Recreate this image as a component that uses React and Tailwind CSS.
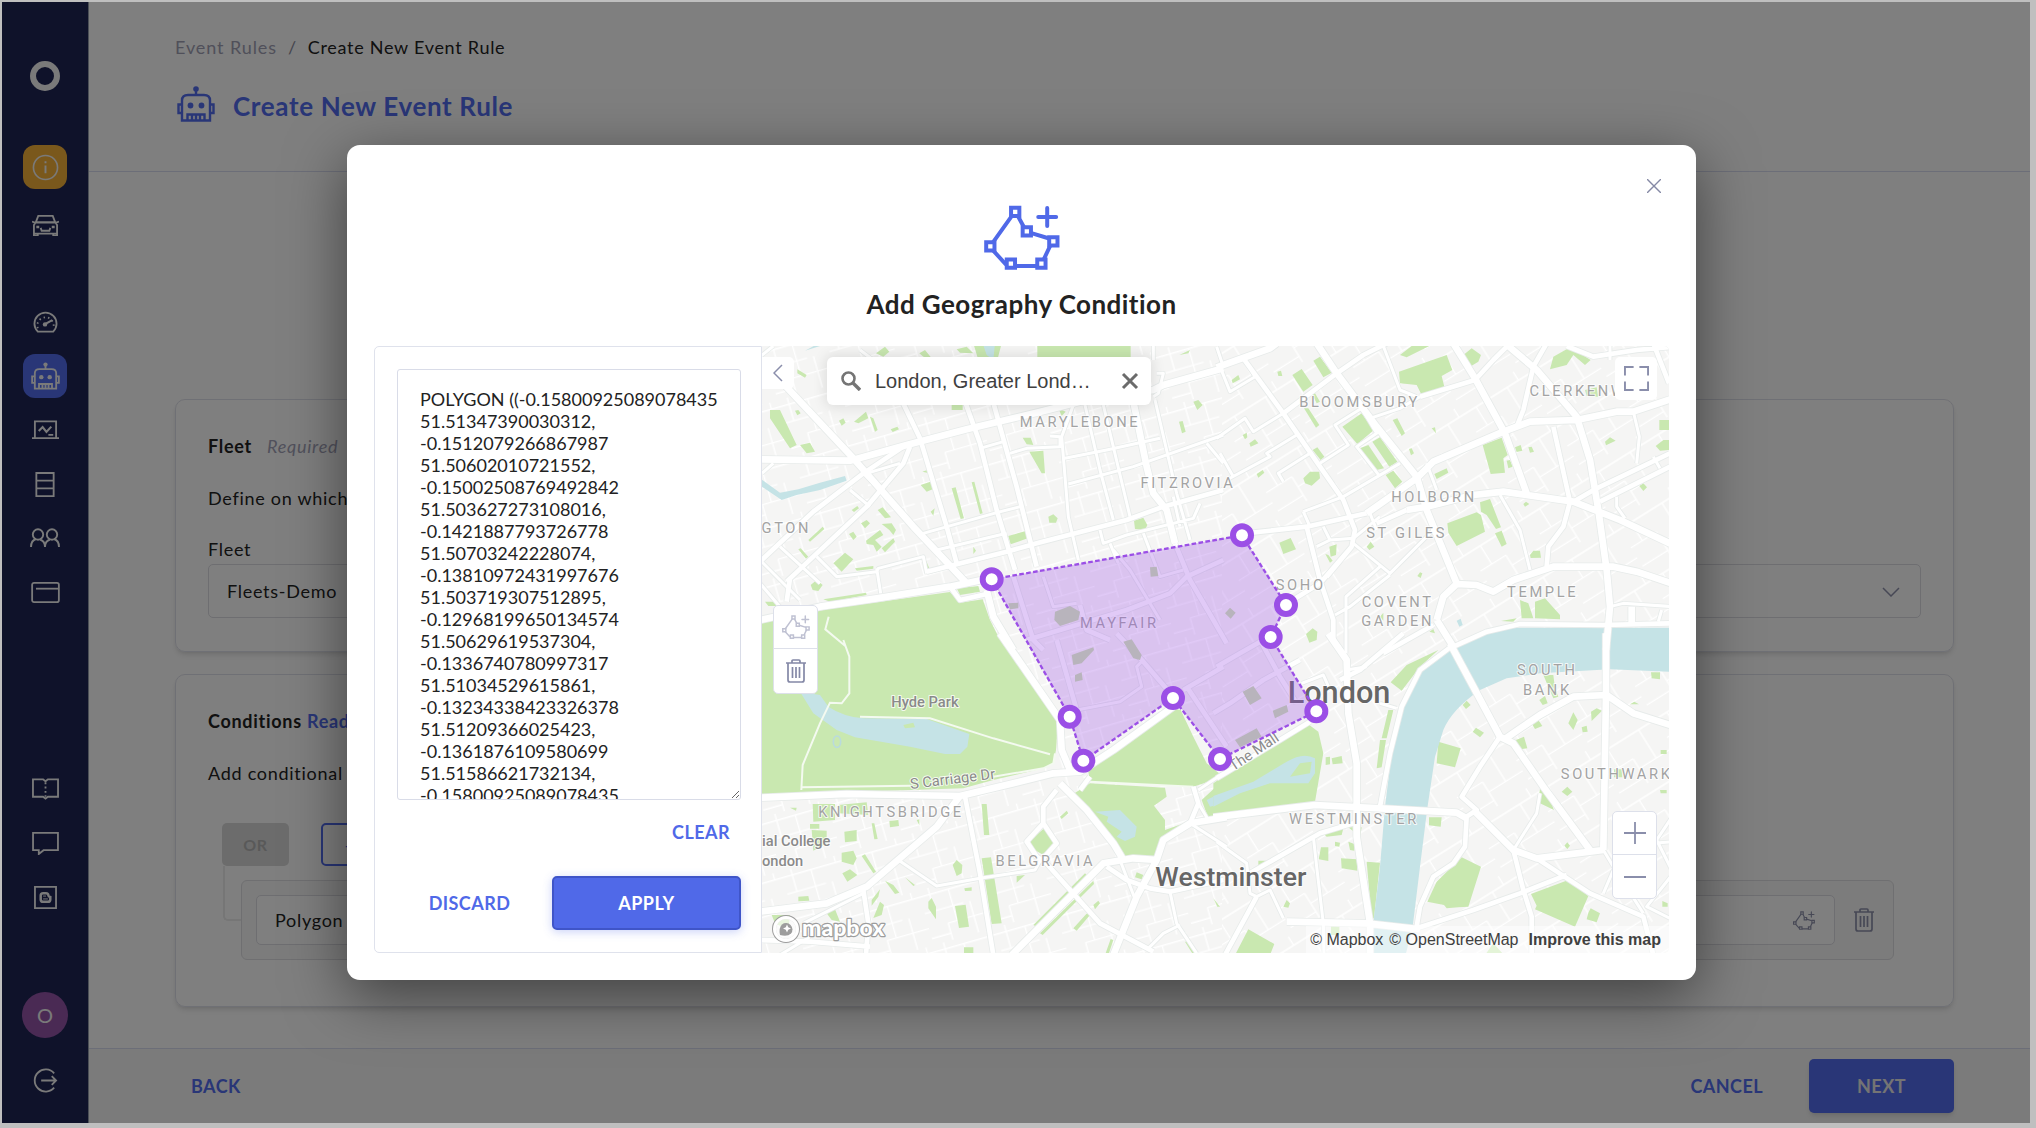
import { useState } from "react";

const WKT = `POLYGON ((-0.15800925089078435 51.51347390030312, -0.1512079266867987 51.50602010721552, -0.15002508769492842 51.503627273108016, -0.1421887793726778 51.50703242228074, -0.13810972431997676 51.503719307512895, -0.12968199650134574 51.50629619537304, -0.1336740780997317 51.51034529615861, -0.13234338423326378 51.51209366025423, -0.1361876109580699 51.51586621732134, -0.15800925089078435 51.51347390030312))`;

// ---------- icons ----------

const PolygonIcon = ({ className }) => (
  <svg viewBox="0 0 228 196" className={className} fill="none" stroke="currentColor" strokeWidth="12" aria-hidden="true">
    <path d="M84 32 27 112M102 34l18 33M140 84l56 17M200 121l-20 42M160 184H92M26 136l40 44" />
    <path d="M81 8h25v25H81zM116 67h25v25h-25zM196 97h25v25h-25zM160 164h25v25h-25zM68 164h25v25H68zM6 112h25v25H6z" />
    <path d="M190 9v54M163 36h54" strokeLinecap="round" />
  </svg>
);

const RobotIcon = ({ className }) => (
  <svg viewBox="0 0 38 36" className={className} fill="none" stroke="currentColor" strokeWidth="2.400" aria-hidden="true">
    <circle cx="19" cy="3" r="2.800" fill="currentColor" stroke="none" />
    <path d="M19 4v5M5 34.500V14.500q0-5.500 6-5.500h16q6 0 6 5.500v20zM5 18.500H1.500V27H5M33 18.500h3.500V27H33" />
    <path d="M10.500 34.500v-6h17v6M15 28.500v6M19 28.500v6M23 28.500v6" />
    <circle cx="13.500" cy="19.500" r="2.900" fill="currentColor" stroke="none" />
    <circle cx="24.500" cy="19.500" r="2.900" fill="currentColor" stroke="none" />
  </svg>
);

const TrashIcon = ({ className }) => (
  <svg viewBox="0 0 20 24" className={className} fill="none" stroke="currentColor" strokeWidth="1.700" aria-hidden="true">
    <path d="M0 4h20M6 4V2q0-1 1-1h6q1 0 1 1v2M2 4v17q0 2 2 2h12q2 0 2-2V4M6.500 8v11M10 8v11M13.500 8v11" />
  </svg>
);

const InfoIcon = () => (
  <svg viewBox="0 0 28 28" className="w-[27px] h-[27px]" fill="none" stroke="currentColor" strokeWidth="1.700" aria-hidden="true">
    <circle cx="14" cy="14" r="12.500" />
    <path d="M14 12v8M14 7.500v2" strokeWidth="2" />
  </svg>
);

const CarIcon = () => (
  <svg viewBox="0 0 28 22" className="w-[27px] h-[22px]" fill="none" stroke="currentColor" strokeWidth="1.900" aria-hidden="true">
    <path d="M4 8 6.500 1.500h15L24 8M0 7.500l3 1h22l3-1M2 20V11l2-3h20l2 3v9zM2 20v2h4v-2M22 20v2h4v-2M9 14l1 3h8l1-3" />
    <path d="M4.500 13h3M20.500 13h3" strokeWidth="2.500" />
  </svg>
);

const GaugeIcon = () => (
  <svg viewBox="0 0 26 22" className="w-[25px] h-[22px]" fill="none" stroke="currentColor" strokeWidth="1.900" aria-hidden="true">
    <path d="M5 21A11.500 11.500 0 1 1 21 21z" />
    <path d="m13 13 7-4" strokeWidth="2.200" />
    <circle cx="12.500" cy="13.500" r="2.300" fill="currentColor" stroke="none" />
    <path d="M5 17.500a8.500 8.500 0 1 1 16 0" strokeDasharray="1.500 3.200" />
  </svg>
);

const LaptopIcon = () => (
  <svg viewBox="0 0 28 20" className="w-[27px] h-5" fill="none" stroke="currentColor" strokeWidth="1.900" aria-hidden="true">
    <path d="M3 18V1h22v17M0 18.500h28M17 15h5" />
    <path d="m7 11 4-4 4 5 5-5.500" strokeWidth="2.200" />
  </svg>
);

const RowsIcon = () => (
  <svg viewBox="0 0 20 26" className="w-5 h-[25px]" fill="none" stroke="currentColor" strokeWidth="1.900" aria-hidden="true">
    <path d="M1 1h18v24H1zM1 9h18M1 17h18" />
  </svg>
);

const UsersIcon = () => (
  <svg viewBox="0 0 30 20" className="w-[30px] h-5" fill="none" stroke="currentColor" strokeWidth="1.900" aria-hidden="true">
    <circle cx="8" cy="6.500" r="5.200" />
    <circle cx="22" cy="6.500" r="5.200" />
    <path d="M1 19q0-6.500 5-8M10 11.500q5 1.500 5 7.500 0-6 5-7.500M24 11q5 1.500 5 8" />
  </svg>
);

const CardIcon = () => (
  <svg viewBox="0 0 30 22" className="w-[29px] h-[21px]" fill="none" stroke="currentColor" strokeWidth="1.900" aria-hidden="true">
    <rect x="1" y="1" width="28" height="20" rx="2" />
    <path d="M5 7h24" />
  </svg>
);

const BookIcon = () => (
  <svg viewBox="0 0 28 22" className="w-[27px] h-[22px]" fill="none" stroke="currentColor" strokeWidth="1.900" aria-hidden="true">
    <path d="M1 1h10.500L14 3l2.500-2H27v18H16.500L14 21l-2.500-2H1z" />
    <path d="M14 4v15" strokeDasharray="2 2.500" />
  </svg>
);

const ChatIcon = () => (
  <svg viewBox="0 0 28 24" className="w-[27px] h-[23px]" fill="none" stroke="currentColor" strokeWidth="1.900" aria-hidden="true">
    <path d="M1 1h26v18H12l-5 4v-4H1z" />
  </svg>
);

const BlogIcon = () => (
  <svg viewBox="0 0 24 24" className="w-[23px] h-[23px]" fill="none" stroke="currentColor" strokeWidth="1.900" aria-hidden="true">
    <path d="M1 1h22v22H1z" />
    <path d="M9.500 7.500h3q2.500 0 2.500 2.500 0 1 2 1.500v2.500q0 2.500-2.500 2.500h-5Q7 16.500 7 14v-4q0-2.500 2.500-2.500z" strokeWidth="2.600" />
    <path d="M9.500 10.500h3M9.500 13.500h5" strokeWidth="1" />
  </svg>
);

const LogoutIcon = () => (
  <svg viewBox="0 0 26 26" className="w-[25px] h-[25px]" fill="none" stroke="currentColor" strokeWidth="1.900" aria-hidden="true">
    <path d="M22 5.500a11.500 11.500 0 1 0 0 15M8.500 13H24M19.500 8.500 24 13l-4.500 4.500" />
  </svg>
);

// ---------- map data, drawn at three units per pixel ----------

const tiles = [
  {
    at: "translate(-6 -48)",
    parks:
      "M0 880 40 872 200 838 570 786 600 818 668 808 690 870 740 970 0 970zM832 40H1112V90H832zM640 40H725L712 90H655zM30 240 60 240 110 345 90 355 30 265zM120 345 150 338 165 365 140 370zM112 118 140 135 135 143 112 130zM105 242 115 240 122 250 112 256zM237 272 250 265 257 278 245 287zM282 275 318 245 325 265 295 280zM330 260 340 265 353 300 345 305zM392 298 412 290 417 298 398 306zM575 215H608V240H575zM895 235 917 245 905 258zM788 323 812 323 820 345 800 343zM808 365 850 362 855 430 845 430zM865 560 880 553 893 565 888 578 868 578zM745 618 797 603 803 625 752 643zM1122 572 1150 563 1162 585 1155 600 1125 597zM575 475 587 472 612 565 602 567zM635 457 643 455 668 550 660 552zM482 465 520 452 525 475 500 485zM487 425 508 418 508 430zM512 545 524 535 520 557zM275 540 292 528 297 535 282 546zM353 540 368 532 393 562 375 565zM303 580 320 570 330 580 315 595zM267 612 280 605 290 620 280 630zM318 632 360 600 370 615 345 630 365 650 350 665 340 645 320 642zM365 582 395 580 408 600 400 615 388 600zM365 655 400 625 405 635 375 667zM220 700 255 668 280 688 245 725zM285 715 340 708 340 716 290 722zM485 685 495 685 508 715 498 720zM145 630 188 590 193 597 150 635zM115 658 122 655 145 680 138 686zM152 765 170 750 188 765 175 783 158 780zM190 808 318 788 320 795 210 815zM590 775 655 768 660 785 600 795zM15 815 45 815 50 828 25 828zM1300 215 1315 210 1328 225 1312 240zM1257 275 1268 273 1277 305 1266 310zM1258 75 1290 60 1285 70zM640 650 648 662 640 672zM348 70 375 50 388 65 370 80zM478 70 495 60 515 85 490 80zM590 58 620 50 640 70 600 68z",
    water: "M0 445 60 488 115 478 180 458 255 438 260 452 180 480 110 495 65 510 35 490 0 466zM135 62 180 48 165 46zM668 40H705L700 90 680 75z",
    wide:
      "M0 388 270 392 440 345 620 298 830 248 960 215 1180 180 1210 165 1390 115M0 870 180 830 350 805 570 770 690 745M680 780 700 860 760 960M0 100 60 150 280 385 460 590 620 760M1120 215 1160 410 1180 490 1220 540 1245 640",
    mid:
      "M610 200 660 340 710 540 765 720M695 200 770 470 830 710M420 200 480 325 560 590 590 700M0 695 160 545 310 430 430 350M80 755 320 530 430 400 450 350M500 725 740 665 830 640 1100 570 1210 530 1390 480M570 770 600 810 690 790M90 745 80 815M760 740 820 930 850 960M960 825 980 900 1050 930M800 930 900 900 1100 840 1230 790 1280 740 1390 690M1245 640 1290 750 1360 870 1400 940",
    narrow:
      "M270 480 330 530M310 430 370 490M490 610 710 548 780 530M530 660 740 610M170 680 230 740 350 725 355 715 490 680 500 730M350 715 362 790M60 650 180 760M0 690 120 810M0 760 60 830M940 225 905 320 925 560 955 690M975 225 1020 420 1060 570M1030 225 1110 560M1185 210 1250 490 1290 630M750 370 800 355 900 350 900 320 870 318M915 385 1040 360 1200 325M925 462 1120 410 1390 315M1020 600 1030 640 1100 615 1300 565 1320 520M660 355 730 335M6 430 40 400M1180 40V90M1190 130 1210 130 1195 190 1180 200M1340 340 1390 400M1370 50 1390 110M850 740 880 830 950 820M1060 660 1110 720 1200 870M1150 610 1200 740 1270 720M320 430 420 400M1050 640 1075 700M0 80 40 48M430 225 380 120 300 60M1240 500 1260 590",
  },
  {
    at: "translate(1374 -48)",
    parks:
      "M540 75 575 48 628 48 560 82zM537 125 680 75 697 120 665 138 673 170 605 195 590 165 540 160zM730 75 755 55 783 75 775 95 750 110zM1000 80 1050 52 1112 90 1095 105 1060 75 1040 105 990 118zM217 135 245 117 278 165 250 185zM280 92 300 80 335 128 310 142zM35 150 55 135 60 148 38 160zM172 125 183 122 187 138 175 138zM252 235 265 235 298 285 288 293zM275 190 285 190 300 215 290 220zM367 290 425 250 462 300 412 342zM420 355 445 345 492 415 470 420zM457 335 480 322 532 395 508 410zM497 435 520 422 547 455 525 475zM518 270 532 265 555 310 545 318zM635 295 645 292 648 310zM567 357 575 355 582 370 573 376zM643 432 680 415 685 428 650 447zM278 360 292 352 313 380 302 390zM250 445 270 425 298 425 300 445 275 467 255 460zM68 315 80 308 82 322 75 328zM88 340 105 328 115 340 92 350zM110 432 128 420 133 428 115 443zM788 345 845 323 863 375 850 385 855 428 812 432zM885 352 902 345 907 362 890 366zM925 352 935 350 942 365 930 368zM860 392 870 390 878 410 865 415zM1155 335 1170 322 1187 332 1158 346zM1318 270H1350V300H1318zM1307 348 1330 330 1350 330 1350 360 1320 362zM1258 468 1270 460 1281 472 1270 483zM910 522 918 515 928 522 915 530zM682 580 770 547 783 555 795 605 710 648 685 608zM780 517 810 507 843 592 828 597 800 555 783 545zM825 610 845 602 860 642 845 650zM930 675 940 662 960 662 963 683 932 684zM178 638 212 624 228 658 190 672zM328 650 350 643 348 675 332 680zM316 672 325 675 338 692 330 698zM440 650 452 635 463 650 448 660zM592 738 600 727 607 730 602 744zM258 912 278 895 292 905 290 930 268 938zM480 860 490 848 490 872zM900 810 925 820 940 865 905 865zM945 815 975 805 1020 855 1020 868 945 865zM843 873 890 865 880 875zM628 905 640 897 645 910zM1095 180 1130 172 1135 200 1100 198z",
    water: "M710 872 722 866 728 885 718 890z",
    wide:
      "M-10 112 150 55 170 40M290 40 350 130 470 290 590 440 620 540 710 760M440 550 590 445 640 395 850 305 930 275 1070 270 1190 245 1240 245 1360 205M700 40 765 145 855 310 920 490M865 48 950 120 1070 260 1110 390 1135 540 1160 720 1170 830 1158 960M560 540 620 530 760 495 850 485 1060 515 1200 570 1360 645M650 870 670 800 710 762 770 765 820 785 880 750 1000 710 1180 710 1250 725 1360 762M650 870 700 950M1235 830V880",
    mid:
      "M70 85 190 250 300 410 370 510 405 600 395 650 320 740M980 40 940 110 910 240 890 290M600 200 765 150 820 90 870 40M190 250 350 130 430 75 500 40M60 612 260 590 440 550M1060 515 1130 475 1360 365M1140 515 1360 405M1000 290 1050 515 1030 590 985 650 980 710M700 950 800 905 900 882 1150 885 1360 880M260 590 300 750 340 870 340 930 370 970M210 815 300 760 395 650M470 580 560 540M1300 40 1347 160M1040 48 1120 80 1250 60 1360 50M490 970 640 885",
    narrow:
      "M0 110 30 185 105 140 75 90M-10 325 75 265 100 305 190 250M20 450 150 380 140 370 230 315M190 455 175 430 270 370M450 265 540 235 600 200M300 400 385 345 345 285 425 235 470 310 410 350 480 440M490 48 540 180 590 200M620 400 650 480M1240 245 1258 320 1250 400M840 495 900 600 930 720M1300 380 1320 415M1190 500 1190 530 1215 565M250 545 270 590M250 545 370 500 540 400M450 550 470 600M290 650 330 630 400 625 480 560M400 640 510 730 550 690 640 600M378 970 378 800 480 710M345 855 390 830 510 735M310 590 330 630M1170 40V90M1170 830 1210 820 1360 830M1315 875 1325 840M0 370 40 440",
  },
  {
    at: "translate(-6 882)",
    parks:
      "M0-10H715L895 230 888 330 880 370 850 385 700 420 610 445 0 465zM985 395 1230 205 1262 210 1300 290 1340 370 1390 410 1300 440 990 425zM940 462 990 430 1215 443 1220 470 1182 497 1215 540 1215 570 1285 545 1205 600 1180 655 1090 650 1050 580 980 500zM1325 480 1390 420 1390 535 1345 535zM812 600 850 567 890 600 880 630 845 642 815 625zM665 492 680 492 688 585 672 585zM665 655 693 652 725 850 695 852zM900 530 920 512 925 520 905 537zM90 503 110 503 108 512zM158 492 225 492 225 540 160 545zM235 495 320 487 325 525 235 520zM155 570 200 572 200 610 160 632zM253 575 290 570 290 603 255 607zM335 550 343 550 353 597 343 598zM388 543 415 540 417 558 390 562zM150 552H178V566H150zM470 540 478 538 478 556zM245 638 280 632 290 655 280 675 245 665zM305 648 315 643 348 695 340 700zM247 700 270 688 292 705 262 725zM578 675 590 660 607 675 605 700 590 708zM585 798 617 794 627 860 597 864zM613 745 635 742 635 752 615 753zM505 785 515 774 528 800 528 838 505 805zM435 712 465 735 460 738zM375 722 400 735 418 758 405 762zM335 780 360 748 355 770 335 797zM360 785 372 795 365 825 340 834zM820 855 975 700 980 705 830 860zM840 880 1000 722 1002 732 848 885zM940 865 985 815 990 825 950 872zM1000 795 1015 782 1020 790 1005 808zM770 708 795 705 770 728zM200 820 225 808 240 845 215 840zM35 825 90 825 85 870 45 850zM115 770 145 768 148 782 115 784zM612 922H640V945H612zM1035 945 1052 897 1060 900 1045 945zM1275 905 1290 905 1310 945 1300 945zM1360 775 1380 800 1372 800zM1125 712 1130 697 1150 705 1145 718z",
    water:
      "M120 155 180 165 205 200Q250 230 310 235L500 237 628 282 622 320 600 342 555 342 450 320 285 292 230 270 160 220zM1005 515 1080 510 1130 560 1125 590 1095 603 1070 590 1085 575 1040 545 1045 530zM1340 480 1390 455 1390 490 1350 500z",
    wide:
      "M0 473 260 462 600 468 760 430 880 400 960 395 1060 330 1240 200M600 468 530 560 320 740 200 790 0 815M720-20 900 240 905 330 930 390M900 430 980 510 1060 610 1090 660M755 945 1030 670 1120 655 1190 660 1210 600 1290 550 1400 532M1190 660 1130 770 1060 945",
    mid:
      "M615 470 660 700 700 945M310 750 325 850 318 945M890 450 850 500 850 550 800 605 830 650 845 660 890 610 850 550M850 660 1020 850 1180 935M1040 680 1100 720 1170 745 1230 755 1390 720M1300 440 1315 490 1290 550M0 900 150 905 330 920M960 450 990 410M890 0 950 210M1070-20 1150 65 1240 170M1270 150 1390 80M1280 140 1400 320",
    narrow:
      "M845 655 825 690 660 715 530 738 415 660M1080 660 1130 790M1230 755 1250 850 1310 940M1160 930 1210 880 1260 855M1315 450 1390 400M1315 490 1345 540M1290 550 1400 620M130 850 310 760M60 945 150 890M950 210 1080 185 1145 140 1130 80 1150 60",
  },
  {
    at: "translate(1374 882)",
    parks:
      "M-20 430 255 245 295 275 310 340 285 485-20 525zM512 127 560 75 655 30 600 80 545 152zM505 210 520 210 500 295 485 295zM480 300 498 300 485 382 470 385zM655 305 722 325 705 382 650 370zM728 195 740 182 752 195 738 207zM758 275 768 263 792 278 780 292zM935 250 955 240 967 258 945 267zM875 305 912 290 922 325 900 328zM1045 250 1060 217 1073 240 1060 270zM1113 215 1130 205 1146 212 1115 243zM1085 262 1100 257 1103 275 1088 277zM1230 193 1243 185 1257 193zM1293 97 1320 97 1320 118 1295 115zM970 105 1000 105 1005 145 1015 170 1000 175 985 140zM958 180 975 168 983 190 968 195zM1025 455 1042 440 1057 455 1042 468zM958 460 965 415 1002 510 960 490zM1322 330H1340V342H1322zM1320 450H1340V460H1322zM1182 388H1207V412H1182zM627 532 665 532 662 560 627 556zM725 652 783 680 745 800 715 802 680 805 672 795 622 785 650 725zM933 762 1045 720 1105 768 1065 860 945 808 950 797zM1105 818 1112 805 1140 820 1130 847 1100 838zM440 665 480 668 462 835 455 835zM363 655 410 658 412 692 365 685zM303 622 325 622 325 663 296 658zM345 605 360 608 358 620 345 618zM385 605 403 612 403 632 390 630zM300 570 370 565 365 585 320 590zM385 562 425 562 420 590zM335 355 365 348 368 370 338 373zM317 352 330 350 330 373 317 375zM45 945 85 868 163 912 150 945zM190 800 200 780 210 790 205 803zM115 662 140 662 138 680 115 678zM333 855H358V885H333zM795 945 820 910 852 945zM1327 783 1343 790 1343 800 1327 800zM1033 617 1042 607 1050 617 1042 627z",
    water: "M-20 500-20 468 100 425 200 365Q250 335 285 355L285 400 265 430 150 430 60 460z",
    wide:
      "M690 10 760 140 840 290 880 310 970 440 1110 630M850 300 960 225 1060 170 1160 165 1240 220 1360 258M1158-20 1158 160 1150 630M-20 532 285 495 480 505 710 518 740 535M765 515 880 630 950 655 1150 630M325-20 380 60 385 220 410 370 410 590 450 850 450 945M200 845 440 850 600 868",
    mid:
      "M840 290 780 380 725 470 770 510 740 530 735 620 700 670 640 710 600 800 590 860M880 630 910 750 935 830 935 945M590 865 760 810 900 760 1040 705M950 655 1110 760 1270 830 1300 945M700 15 600 90 545 200 510 340 480 500M80 705 300 580 400 550M110 770 15 945M360 120 420 90 550-20M-10 415 180 300 270 245M-20 220 30 190 130 120 240 60M120 0 180 110 230 190M-10 80 60 40 130 0",
    narrow:
      "M960 460 950 520 880 630M-10 605 80 670 90 760 110 770 150 750 190 835M280 590 290 680 310 850 312 945M380 90 440 80M480 190 530 205M245 130 310 105 330 150M1150 630 1180 680 1270 820M1360 525 1310 600 1360 700 1280 800 1360 840M1300 610 1360 605M1150 760 1180 690",
  },
];

const thames =
  "M2079 902Q2154 852 2244 845H2730V978L2544 970 2334 982 2234 997 2154 1032Q2070 1090 2044 1152L2019 1232 1996 1387 1974 1562 1952 1742 1930 1830H1827L1836 1712 1854 1562 1869 1382 1894 1182 1919 1082 1954 1012 1994 957z";

const trails =
  "M244 882 262 932V1042L239 1072 204 1070 174 1132 122 1257 118 1332M294 1112 504 1117 694 1177 864 1225M118 1324 444 1319M694 1292 844 1267 874 1252 879 1222M200 812 190 850 250 900M984 1307 1294 1322";

const muted =
  "M879 797 924 780 954 797 949 822 894 840 877 822zM1164 664 1184 662 1189 690 1166 692zM739 772 769 770 769 787 744 790zM1389 802 1404 785 1421 800 1406 818zM929 927 994 904 996 912 959 952 934 957zM939 987 959 979 962 1002 939 1007zM1084 887 1109 880 1139 927 1134 942 1114 937zM1442 1037 1474 1020 1499 1057 1464 1077zM1532 1094 1574 1077 1579 1097 1539 1117zM1419 1182 1484 1147 1499 1172 1434 1204z";

const vertices = [
  [689, 700],
  [1440, 568],
  [1572, 777],
  [1526, 873],
  [1663, 1096],
  [1374, 1239],
  [1233, 1056],
  [964, 1244],
  [923, 1112],
];

const districts = [
  ["MARYLEBONE", 954, 242],
  ["FITZROVIA", 1278, 425],
  ["GTON", 73, 560],
  ["BLOOMSBURY", 1793, 184],
  ["CLERKENWELL", 2496, 151],
  ["HOLBORN", 2016, 469],
  ["ST GILES", 1934, 577],
  ["SOHO", 1616, 732],
  ["COVENT", 1907, 783],
  ["GARDEN", 1907, 841],
  ["TEMPLE", 2342, 752],
  ["KNIGHTSBRIDGE", 387, 1412],
  ["BELGRAVIA", 850, 1559],
  ["SOUTH", 2356, 987],
  ["BANK", 2356, 1046],
  ["SOUTHWARK", 2564, 1299],
  ["WESTMINSTER", 1776, 1434],
];

const layers = [
  ["wide", 20],
  ["mid", 14],
  ["narrow", 9],
];

const CityMap = () => (
  <svg viewBox="0 0 2721 1821" preserveAspectRatio="xMidYMid slice" className="absolute inset-0 w-full h-full" role="img" aria-label="Map of central London">
    <defs>
      <pattern id="grid" width="190" height="170" patternUnits="userSpaceOnUse" patternTransform="rotate(-16)">
        <path d="M0 20H190M0 72H120M60 118H190M30 0V72M88 20V118M140 72V170M60 118V170M165 0V20M0 150H60" fill="none" stroke="#fff" strokeWidth="4" />
      </pattern>
      <pattern id="gridEast" width="210" height="180" patternUnits="userSpaceOnUse" patternTransform="rotate(-32)">
        <path d="M0 30H210M0 95H90M90 130H210M40 30V95M90 95V180M150 30V130M190 0V30M0 160H90" fill="none" stroke="#fff" strokeWidth="4" />
      </pattern>
    </defs>
    <path d="M0 0H2721V1821H0z" fill="#f5f5f4" />
    <path d="M0 0H1380V1821H0z" fill="url(#grid)" />
    <path d="M1380 0H2721V1821H1380z" fill="url(#gridEast)" />
    {tiles.map((t) => (
      <g key={t.at} transform={t.at}>
        <path d={t.parks} fill="#c9e8b0" />
        <path d={t.water} fill="#c5e3e6" />
      </g>
    ))}
    <path d="M424 1137 454 1130 459 1144 429 1147zM1584 1292 1614 1252 1649 1247 1644 1282z" fill="#c9e8b0" />
    <ellipse cx="225" cy="1187" rx="11" ry="17" fill="none" stroke="#b9dadd" strokeWidth="5" />
    <path d={thames} fill="#c5e3e6" />
    <path d={trails} fill="none" stroke="#f4faf0" strokeWidth="6" />
    {/* casings go first so junctions stay open */}
    <g fill="none" stroke="#e7ebea" strokeLinejoin="round">
      {tiles.map((t) => (
        <g key={t.at} transform={t.at}>
          {layers.map(([name, width]) => (
            <path key={name} d={t[name]} strokeWidth={width + 5} />
          ))}
        </g>
      ))}
    </g>
    <g fill="none" stroke="#fff" strokeLinejoin="round">
      {tiles.map((t) => (
        <g key={t.at} transform={t.at}>
          {layers.map(([name, width]) => (
            <path key={name} d={t[name]} strokeWidth={width} />
          ))}
        </g>
      ))}
    </g>

    <g
      fontFamily="Roboto, 'Liberation Sans', sans-serif"
      fontSize="44"
      fill="#a3a3a3"
      stroke="#fff"
      strokeOpacity="0.8"
      strokeWidth="6"
      strokeLinejoin="round"
      paintOrder="stroke"
    >
      <g textAnchor="middle" className="tracking-[0.18em]">
        {districts.map(([name, x, y]) => (
          <text key={name} x={x} y={y}>
            {name}
          </text>
        ))}
        <text x="1072" y="847">MAYFAIR</text>
      </g>
      <g fill="#8a8a8a" fontWeight="500">
        <text x="388" y="1083">Hyde Park</text>
        <text x="446" y="1329" fontWeight="400" transform="rotate(-7 446 1329)">S Carriage Dr</text>
        <text x="1414" y="1276" fontWeight="400" transform="rotate(-34 1414 1276)">The Mall</text>
        <text x="0" y="1501">ial College</text>
        <text x="0" y="1560">ondon</text>
      </g>
      <g fill="#666" fontSize="80" fontWeight="500">
        <text x="1180" y="1620">Westminster</text>
        <text x="1577" y="1072" fontSize="92">London</text>
      </g>
    </g>

    <polygon points={vertices.join(" ")} fill="#9b4fe6" fillOpacity="0.3" />
    <path d={muted} fill="#b8b4bc" />
    <polygon points={vertices.join(" ")} fill="none" stroke="#9b4fe6" strokeWidth="7" strokeDasharray="14 7" />
    {vertices.map(([x, y]) => (
      <circle key={x} cx={x} cy={y} r="27" fill="#fff" stroke="#9b4fe6" strokeWidth="18" />
    ))}
  </svg>
);

// ---------- page parts ----------

const NavItem = ({ label, className = "", children }) => (
  <a href="#" aria-label={label} className={`flex items-center justify-center w-11 h-11 rounded-xl ${className}`}>
    {children}
  </a>
);

const Sidebar = () => (
  <nav className="flex flex-col items-center w-[87px] shrink-0 pt-[59px] pb-[21px] bg-[#1e2454] border-r border-gray-400 text-[#f4f4f4]">
    <a href="#" aria-label="Home" className="w-[30px] h-[30px] rounded-full border-[6px] border-[#f4f4f4]"></a>
    <NavItem label="Info" className="mt-[54px] bg-[#f5b038]">
      <InfoIcon />
    </NavItem>
    <NavItem label="Vehicles" className="mt-3.5">
      <CarIcon />
    </NavItem>
    <div className="flex flex-col gap-2.5 mt-[53px]">
      <NavItem label="Dashboard">
        <GaugeIcon />
      </NavItem>
      <NavItem label="Event rules" className="bg-[#526cee]">
        <RobotIcon className="w-[29px] h-7" />
      </NavItem>
      <NavItem label="Monitoring">
        <LaptopIcon />
      </NavItem>
      <NavItem label="Lists">
        <RowsIcon />
      </NavItem>
      <NavItem label="Users">
        <UsersIcon />
      </NavItem>
      <NavItem label="Billing">
        <CardIcon />
      </NavItem>
    </div>
    <div className="flex flex-col gap-2.5 mt-auto">
      <NavItem label="Docs">
        <BookIcon />
      </NavItem>
      <NavItem label="Support">
        <ChatIcon />
      </NavItem>
      <NavItem label="Blog">
        <BlogIcon />
      </NavItem>
    </div>
    <a href="#" className="flex items-center justify-center w-[46px] h-[46px] mt-[73px] rounded-full bg-[#9555a8] text-[20px]">
      O
    </a>
    <NavItem label="Log out" className="mt-5">
      <LogoutIcon />
    </NavItem>
  </nav>
);

const FleetCard = () => (
  <section className="px-8 pt-[35px] pb-[33px] rounded-[10px] border border-[#dfe0ea] shadow-md">
    <h2 className="font-bold">
      Fleet <em className="ml-2.5 font-normal text-[#a3a3b8]">Required</em>
    </h2>
    <p className="mt-[30px]">Define on which fleet the event rule will be applied</p>
    <label htmlFor="fleet" className="block mt-[29px]">
      Fleet
    </label>
    <div className="relative mt-1">
      <select id="fleet" className="w-full h-[54px] pl-[18px] rounded-[5px] border border-[#dcdce2] appearance-none">
        <option>Fleets-Demo</option>
      </select>
      <svg viewBox="0 0 18 10" className="absolute right-[21px] top-[23px] w-[18px] h-2.5 pointer-events-none" fill="none" stroke="#8e91ab" strokeWidth="1.500" aria-hidden="true">
        <path d="m1 1 8 8 8-8" />
      </svg>
    </div>
  </section>
);

const ConditionsCard = () => (
  <section className="mt-[22px] px-8 pt-[35px] pb-[46px] rounded-[10px] border border-[#dfe0ea] shadow-md">
    <h2 className="font-bold">
      Conditions{" "}
      <a href="#" className="text-[#526cee]">
        Read more
      </a>
    </h2>
    <p className="mt-[30px]">Add conditional statements to the rule</p>
    <div className="flex gap-8 mt-[39px] ml-3.5">
      <button disabled className="w-[67px] h-[43px] rounded-[5px] bg-[#d9d9d9] text-[16px] font-bold text-[#b3b3b3]">
        OR
      </button>
      <button className="h-[43px] px-[22px] rounded-[5px] border-2 border-[#526cee] text-[16px] font-bold text-[#526cee]">+ ADD CONDITION</button>
    </div>
    <div className="flex ml-[15px] mr-[27px]">
      <div className="w-[18px] h-[55px] border-l-2 border-b-2 border-[#ececec] rounded-bl-[5px]"></div>
      <div className="flex flex-1 items-center mt-3.5 h-20 pl-3.5 rounded-md border border-[#dfdfe2] bg-[#f8f8f8]">
        <div className="flex flex-1 items-center h-[50px] pr-[19px] rounded-[5px] border border-[#dcdce2] bg-white">
          <input aria-label="Condition" readOnly value="Polygon" className="flex-1 pl-[18px]" />
          <button aria-label="Edit polygon" className="text-[#8e91ab]">
            <PolygonIcon className="w-[22px] h-[19px]" />
          </button>
        </div>
        <button aria-label="Remove condition" className="flex justify-center w-[58px] text-[#8e91ab]">
          <TrashIcon className="w-5 h-6" />
        </button>
      </div>
    </div>
  </section>
);

const MapPanel = () => {
  const [place, setPlace] = useState("London, Greater London, England, United Kingdom");

  return (
    <div className="relative flex-1 overflow-hidden rounded-r-[5px] tracking-normal">
      <CityMap />

      <button aria-label="Collapse panel" className="absolute left-0 top-[11px] flex items-center justify-center w-8 h-8 rounded-r-[5px] bg-white">
        <svg viewBox="0 0 10 18" className="w-2.5 h-[18px]" fill="none" stroke="#8a8eab" strokeWidth="1.500" aria-hidden="true">
          <path d="M9 1 1 9l8 8" />
        </svg>
      </button>

      <div className="absolute left-[65px] top-[11px] flex items-center w-[324px] h-12 pl-3.5 pr-3 rounded-md bg-white shadow-[0_0_13px_2px_rgba(0,0,0,0.1)]">
        <svg viewBox="0 0 20 20" className="w-5 h-5 shrink-0" fill="none" stroke="#757575" strokeWidth="2.600" aria-hidden="true">
          <circle cx="7.500" cy="7.500" r="6" />
          <path d="m12 12 7 7" strokeWidth="3.400" />
        </svg>
        <input
          aria-label="Search place"
          value={place}
          onChange={(e) => setPlace(e.target.value)}
          className="min-w-0 w-[222px] ml-3.5 font-['Liberation_Sans',sans-serif] text-[20px] text-[#404040] text-ellipsis outline-none"
        />
        <button aria-label="Clear search" onClick={() => setPlace("")} className="ml-auto">
          <svg viewBox="0 0 18 18" className="w-[18px] h-[18px]" fill="none" stroke="#6b6b6b" strokeWidth="3" aria-hidden="true">
            <path d="m2 2 14 14M16 2 2 16" />
          </svg>
        </button>
      </div>

      <button aria-label="Full screen" className="absolute right-3 top-[11px] flex items-center justify-center w-[42px] h-[43px] rounded-[5px] bg-white">
        <svg viewBox="0 0 26 26" className="w-[25px] h-[25px]" fill="none" stroke="#8a8eab" strokeWidth="2" aria-hidden="true">
          <path d="M1 10V1h9M16 1h9v9M25 16v9h-9M10 25H1v-9" />
        </svg>
      </button>

      <div className="absolute left-[11px] top-[259px] w-[45px] rounded-[5px] border border-[#dde0ea] divide-y divide-[#dde0ea] bg-white text-[#8488a6]">
        <button aria-label="Draw polygon" disabled className="flex items-center justify-center w-full h-[43px] text-[#bfc1d2]">
          <PolygonIcon className="w-7 h-6" />
        </button>
        <button aria-label="Delete polygon" className="flex items-center justify-center w-full h-11">
          <TrashIcon className="w-5 h-6" />
        </button>
      </div>

      <div className="absolute right-3 bottom-[54px] w-[45px] rounded-[5px] border border-[#dde0ea] divide-y divide-[#dde0ea] bg-white text-[#8a8eab]">
        <button aria-label="Zoom in" className="flex items-center justify-center w-full h-[43px]">
          <svg viewBox="0 0 24 24" className="w-6 h-6" fill="none" stroke="currentColor" strokeWidth="1.800" aria-hidden="true">
            <path d="M1 12h22M12 1v22" />
          </svg>
        </button>
        <button aria-label="Zoom out" className="flex items-center justify-center w-full h-[43px]">
          <svg viewBox="0 0 24 24" className="w-6 h-6" fill="none" stroke="currentColor" strokeWidth="1.800" aria-hidden="true">
            <path d="M1 12h22" />
          </svg>
        </button>
      </div>

      <a href="#" aria-label="Mapbox" className="absolute left-2.5 bottom-2">
        <svg viewBox="0 0 120 32" className="w-[120px] h-8" aria-hidden="true">
          <circle cx="14" cy="16" r="12" fill="none" stroke="#9d9d9d" strokeWidth="4" />
          <circle cx="14" cy="16" r="11.500" fill="#fff" fillOpacity="0.6" stroke="#fff" strokeWidth="3" />
          <path d="M8 22q-1.500-7 2-10.500a6.400 6.400 0 0 1 9 9Q15.500 24 8 22z" fill="#9d9d9d" />
          <path d="m15 11.500 1.200 2.800 2.800 1.200-2.800 1.200-1.200 2.800-1.200-2.800-2.800-1.200 2.800-1.200z" fill="#fff" />
          <text x="30" y="23" fontFamily="Lato, sans-serif" fontWeight="900" fontSize="23" fill="#fff" stroke="#9d9d9d" strokeWidth="2.400" paintOrder="stroke" strokeLinejoin="round">
            mapbox
          </text>
        </svg>
      </a>

      <div className="absolute right-0 bottom-0 flex gap-1.5 h-[27px] pl-1 pr-2 items-center bg-white/50 font-['Liberation_Sans',sans-serif] text-[16px] leading-5 text-[#404040]">
        <a href="#">© Mapbox</a>
        <a href="#">© OpenStreetMap</a>
        <a href="#" className="ml-1 font-bold">
          Improve this map
        </a>
      </div>
    </div>
  );
};

const GeographyDialog = () => {
  const [wkt, setWkt] = useState(WKT);

  return (
    <div role="dialog" aria-labelledby="dialog-title" className="relative flex flex-col items-center w-full max-w-[1349px] px-[27px] pt-[60px] pb-[27px] rounded-[13px] bg-white tracking-wide shadow-[0_16px_60px_rgba(0,0,0,0.5)]">
      <button aria-label="Close" className="absolute right-[35px] top-[34px]">
        <svg viewBox="0 0 14 14" className="w-3.5 h-3.5" fill="none" stroke="#8589a5" strokeWidth="1.400" aria-hidden="true">
          <path d="m0 0 14 14M14 0 0 14" />
        </svg>
      </button>
      <PolygonIcon className="w-[76px] h-[65px] text-[#5069e8]" />
      <h2 id="dialog-title" className="mt-[18px] text-[26px] leading-8 font-bold text-[#222]">
        Add Geography Condition
      </h2>

      <div className="flex w-full mt-[26px]">
        <div className="w-[388px] shrink-0 pt-[22px] pb-[22px] pl-[22px] pr-5 rounded-l-[5px] border border-[#dfe2ec]">
          <textarea
            aria-label="Polygon coordinates"
            value={wkt}
            onChange={(e) => setWkt(e.target.value)}
            className="block w-full h-[431px] pt-[18px] px-[22px] rounded-[3px] border border-[#d9dce8] leading-[22px] tracking-normal text-[#222] resize [scrollbar-width:none]"
          />
          <div className="flex justify-end mt-[21px] pr-[11px]">
            <button onClick={() => setWkt("")} className="font-bold text-[#5069e8]">
              CLEAR
            </button>
          </div>
          <div className="flex gap-2.5 mt-[33px]">
            <button className="w-[145px] h-[54px] font-bold text-[#5069e8]">DISCARD</button>
            <button className="flex-1 h-[54px] rounded-[5px] border-2 border-[#3f55c8] bg-[#5069e8] font-bold text-white shadow-[0_2px_10px_rgba(80,105,232,0.3)]">APPLY</button>
          </div>
        </div>
        <MapPanel />
      </div>
    </div>
  );
};

const App = () => {
  return (
    <div className="flex min-h-screen pt-[2px] pl-[2px] pr-[6px] pb-[5px] bg-[#bfbfbf] font-[Lato,sans-serif] text-[18px] leading-[22px] text-[#222]">
      <div className="relative flex flex-1 bg-white">
        <Sidebar />
        <main className="flex flex-col flex-1 tracking-[0.04em]">
          <header className="pl-[86px] pt-[34px] pb-[45px] border-b border-[#d8dcf0]">
            <div className="flex gap-[11px]">
              <a href="#" className="text-[#a0a0b4] tracking-wider">
                Event Rules
              </a>
              <span className="text-[#8c8c9c]">/</span>
              <span>Create New Event Rule</span>
            </div>
            <div className="flex gap-[18px] mt-7 pl-0.5 text-[#526cee]">
              <RobotIcon className="w-[38px] h-9" />
              <h1 className="text-[26px] leading-10 font-bold tracking-wide">Create New Event Rule</h1>
            </div>
          </header>
          <div className="flex-1 pt-[227px] pl-[86px] pr-[76px]">
            <FleetCard />
            <ConditionsCard />
          </div>
          <footer className="flex items-center h-[75px] pl-[102px] pr-[76px] border-t border-[#d8dcf0] bg-[#f7f7f7] font-bold tracking-wide text-[#526cee]">
            <button>BACK</button>
            <button className="ml-auto mr-[46px]">CANCEL</button>
            <button className="w-[145px] h-[54px] rounded-[5px] bg-[#526cee] text-[#e8e8e8] shadow-md">NEXT</button>
          </footer>
        </main>

        <div className="absolute inset-0 flex items-center justify-center pl-[11px] bg-black/50">
          <GeographyDialog />
        </div>
      </div>
    </div>
  );
};

export default App;
